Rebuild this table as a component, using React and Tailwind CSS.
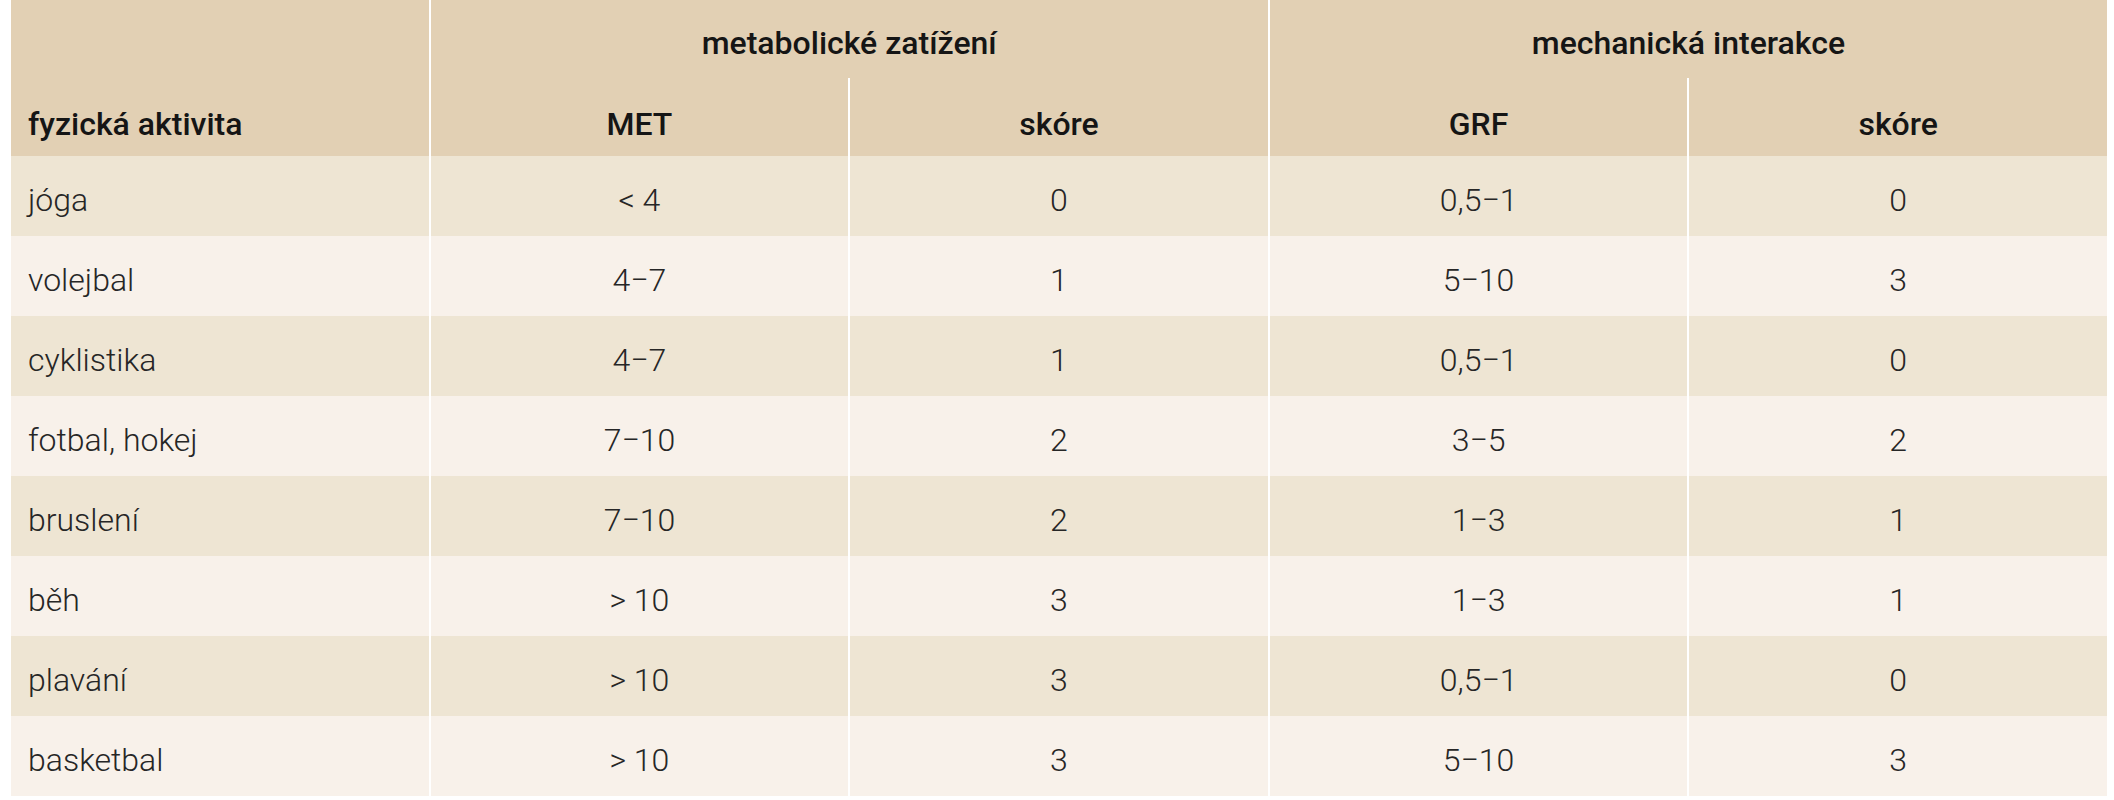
import React from "react";

const rows = [
  ["jóga", "< 4", "0", "0,5−1", "0"],
  ["volejbal", "4−7", "1", "5−10", "3"],
  ["cyklistika", "4−7", "1", "0,5−1", "0"],
  ["fotbal, hokej", "7−10", "2", "3−5", "2"],
  ["bruslení", "7−10", "2", "1−3", "1"],
  ["běh", "> 10", "3", "1−3", "1"],
  ["plavání", "> 10", "3", "0,5−1", "0"],
  ["basketbal", "> 10", "3", "5−10", "3"],
];

export default function App() {
  return (
    <div className="w-[2114px] h-[800px] bg-white pl-[11px]" style={{ fontFamily: "Roboto, 'Noto Sans', sans-serif" }}>
      <div className="w-[2096px] grid grid-cols-5 gap-x-[2px] text-[32px]">
        <div className="row-span-2 bg-[#e2d0b4] flex flex-col justify-end font-medium text-[#151515]">
          <div className="h-[78px] flex items-center pl-[17px] pt-[14px]">fyzická aktivita</div>
        </div>
        <div className="col-span-2 h-[78px] bg-[#e2d0b4] flex items-center justify-center pt-2 font-medium text-[#151515]">
          metabolické zatížení
        </div>
        <div className="col-span-2 h-[78px] bg-[#e2d0b4] flex items-center justify-center pt-2 font-medium text-[#151515]">
          mechanická interakce
        </div>
        {["MET", "skóre", "GRF", "skóre"].map((h, i) => (
          <div key={i} className="h-[78px] bg-[#e2d0b4] flex items-center justify-center pt-[14px] font-medium text-[#151515]">
            {h}
          </div>
        ))}
        {rows.map((r, ri) => (
          <React.Fragment key={ri}>
            {r.map((c, ci) => (
              <div
                key={ci}
                className={
                  (ri % 2 === 0 ? "bg-[#eee5d3] " : "bg-[#f8f1ea] ") +
                  (ci === 0 ? "justify-start pl-[17px] " : "justify-center ") +
                  "h-[80px] flex items-center pt-2 font-light text-[#262626]"
                }
              >
                {c}
              </div>
            ))}
          </React.Fragment>
        ))}
      </div>
    </div>
  );
}
